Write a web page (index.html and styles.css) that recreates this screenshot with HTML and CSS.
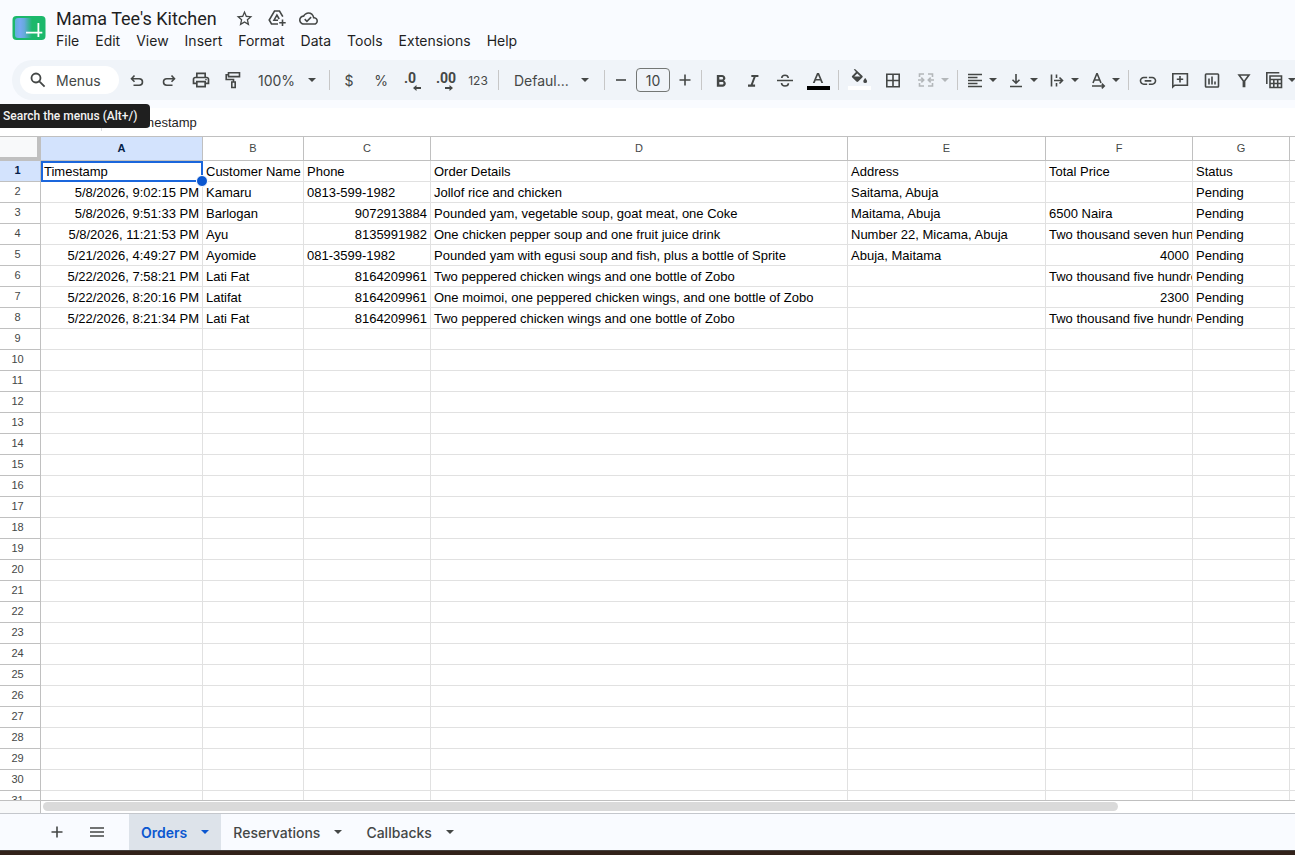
FILE: index.html
```html
<!DOCTYPE html>
<html lang="en">
<head>
  <meta charset="UTF-8">
  <meta name="viewport" content="width=device-width, initial-scale=1">
  <title>Mama Tee's Kitchen</title>
  <link rel="stylesheet" href="styles.css">
</head>
<body>
  <!-- Shared icons -->
  <svg class="sprite" aria-hidden="true">
    <symbol id="caret" viewBox="0 0 8 4"><path d="M0 0h8L4 4z"/></symbol>
    <symbol id="plus" viewBox="0 0 20 20"><path d="M9.200 4.500h1.600v4.700h4.700v1.600h-4.700v4.700H9.200v-4.700H4.500V9.200h4.700z"/></symbol>
  </svg>

  <header class="top">
    <a class="logo" href="#" aria-label="Sheets home">
      <svg width="34" height="26" viewBox="0 0 34 26">
        <defs>
          <linearGradient id="logoBlue"><stop offset="0" stop-color="#5fb0d8"/><stop offset=".3" stop-color="#76a9f2"/><stop offset=".55" stop-color="#66a9dc"/><stop offset="1" stop-color="#1cb86b"/></linearGradient>
        </defs>
        <rect x=".5" y="1" width="33" height="24" rx="4" fill="#1cb86b"/>
        <path d="M6 3h14v20H6a3 3 0 0 1-3-3V6a3 3 0 0 1 3-3z" fill="url(#logoBlue)"/>
        <path d="M25.500 8h1.800v8.700h3v1.700h-3V22h-1.800v-3.600H14v-1.700h11.500z" fill="#fff"/>
      </svg>
    </a>
    <div class="heading">
      <div class="title-row">
        <h1>Mama Tee's Kitchen</h1>
        <button class="mini" aria-label="Star"><svg width="19" height="19" viewBox="0 0 24 24"><path d="M22 9.240l-7.190-.62L12 2 9.190 8.630 2 9.240l5.460 4.730L5.820 21 12 17.270 18.180 21l-1.630-7.030L22 9.240zM12 15.400l-3.760 2.270 1-4.280-3.320-2.880 4.380-.38L12 6.100l1.710 4.040 4.380.38-3.320 2.880 1 4.280L12 15.400z"/></svg></button>
        <button class="mini" aria-label="Add shortcut to Drive"><svg width="20" height="20" viewBox="0 0 20 20"><path class="line" d="M11 16H4.500L2.200 12 7.500 3h5l3.300 5.700M11 12.200H7L9.900 7l2.300 4M15.500 11.500v6.500M12.200 14.800h6.500"/></svg></button>
        <button class="mini" aria-label="See document status"><svg width="19" height="19" viewBox="0 0 24 24"><path d="M19.350 10.040C18.670 6.590 15.640 4 12 4 9.110 4 6.600 5.640 5.350 8.040 2.340 8.360 0 10.910 0 14c0 3.310 2.690 6 6 6h13c2.760 0 5-2.240 5-5 0-2.640-2.050-4.780-4.650-4.960zM19 18H6c-2.210 0-4-1.790-4-4 0-2.050 1.530-3.760 3.560-3.970l1.070-.11.5-.95C8.080 7.140 9.940 6 12 6c2.620 0 4.880 1.860 5.390 4.430l.3 1.500 1.530.11c1.560.1 2.780 1.410 2.780 2.960 0 1.650-1.350 3-3 3zm-9-3.820l-2.090-2.090L6.500 13.500 10 17l6.010-6.010-1.410-1.410z"/></svg></button>
      </div>
      <nav class="menu">
        <button>File</button>
        <button>Edit</button>
        <button>View</button>
        <button>Insert</button>
        <button>Format</button>
        <button>Data</button>
        <button>Tools</button>
        <button>Extensions</button>
        <button>Help</button>
      </nav>
    </div>
  </header>

  <div class="toolbar" role="toolbar" aria-label="Main">
    <label class="search">
      <svg width="20" height="20" viewBox="0 0 20 20"><path class="line thick" d="M11.600 11.600l5 5M12.500 8a4.500 4.500 0 1 1-9 0 4.500 4.500 0 0 1 9 0z"/></svg>
      <input type="text" placeholder="Menus" aria-label="Search the menus">
      <span class="tooltip">Search the menus (Alt+/)</span>
    </label>
    <button class="tool" aria-label="Undo"><svg width="20" height="20" viewBox="0 0 20 20"><path class="line" d="M7.500 5.500L4.500 8.700l3 3.100M4.800 8.700h7.400a3.300 3.300 0 0 1 0 6.600H6.500"/></svg></button>
    <button class="tool" aria-label="Redo"><svg width="20" height="20" viewBox="0 0 20 20"><path class="line" d="M12.500 5.500l3 3.200-3 3.100M15.200 8.700H7.800a3.300 3.300 0 0 0 0 6.600h5.700"/></svg></button>
    <button class="tool" aria-label="Print"><svg width="20" height="20" viewBox="0 0 24 24"><path d="M19 8h-1V3H6v5H5c-1.660 0-3 1.340-3 3v6h4v4h12v-4h4v-6c0-1.660-1.340-3-3-3zM8 5h8v3H8V5zm8 14H8v-4h8v4zm2-4v-2H6v2H4v-4c0-.55.450-1 1-1h14c.55 0 1 .450 1 1v4h-2z"/><circle cx="18" cy="11.500" r="1"/></svg></button>
    <button class="tool" aria-label="Paint format"><svg width="20" height="20" viewBox="0 0 20 20"><path class="line" d="M5.500 2.800h11v3.800h-11zM5.500 4.700H3.200v4.800h7.300v2.500M8.800 12h3.400v5.500H8.800z"/></svg></button>
    <label class="drop zoom">
      <select aria-label="Zoom"><option>100%</option></select>
      <svg class="caret"><use href="#caret"/></svg>
    </label>
    <span class="sep"></span>
    <button class="tool sym">$</button>
    <button class="tool sym">%</button>
    <button class="tool sym dec" aria-label="Decrease decimal places"><b>.0</b><svg width="8" height="6" viewBox="0 0 8 6"><path d="M8 2v2H3.500v2L0 3l3.500-3v2z"/></svg></button>
    <button class="tool sym dec" aria-label="Increase decimal places"><b>.00</b><svg width="8" height="6" viewBox="0 0 8 6"><path d="M0 2v2h4.500v2L8 3 4.500 0v2z"/></svg></button>
    <button class="tool num">123</button>
    <span class="sep"></span>
    <label class="drop font">
      <select aria-label="Font"><option>Defaul...</option></select>
      <svg class="caret"><use href="#caret"/></svg>
    </label>
    <span class="sep"></span>
    <button class="tool step" aria-label="Decrease font size"><svg width="20" height="20" viewBox="0 0 20 20"><path d="M5 9.200h10v1.600H5z"/></svg></button>
    <input class="size" type="text" value="10" aria-label="Font size">
    <button class="tool step" aria-label="Increase font size"><svg width="20" height="20"><use href="#plus"/></svg></button>
    <span class="sep"></span>
    <button class="tool" aria-label="Bold"><svg width="20" height="20" viewBox="0 0 24 24"><path d="M15.600 12.790c.97-.67 1.650-1.770 1.650-2.790 0-2.260-1.750-4-4-4H7v14h7.040c2.090 0 3.710-1.700 3.710-3.790 0-1.520-.86-2.820-2.150-3.420zM10 8.500h3c.83 0 1.500.670 1.500 1.500s-.67 1.500-1.500 1.500h-3v-3zm3.500 9H10v-3h3.500c.83 0 1.500.670 1.500 1.500s-.67 1.500-1.500 1.500z"/></svg></button>
    <button class="tool" aria-label="Italic"><svg width="20" height="20" viewBox="0 0 24 24"><path d="M10 6v2.500h2.700l-3.400 9H6V20h8.500v-2.500h-2.700l3.400-9H18.500V6z"/></svg></button>
    <button class="tool" aria-label="Strikethrough"><svg width="20" height="20" viewBox="0 0 20 20"><path class="line" d="M2 10.500h16M13.300 8C13 6.100 11.800 5.200 10 5.200S6.800 6 6.800 7.900M6.500 13c.2 2 1.600 3 3.500 3s3.400-1 3.400-2.800"/></svg></button>
    <button class="tool color" aria-label="Text color"><svg width="24" height="22" viewBox="0 0 24 22"><path d="M11 4h2l4.200 10h-1.900l-1-2.500H9.700l-1 2.500H6.800zm1 1.900L10.200 10h3.600z"/><path fill="#000" d="M1 17h23v4H1z"/></svg></button>
    <span class="sep"></span>
    <button class="tool color" aria-label="Fill color"><svg width="24" height="22" viewBox="0 0 24 22"><path transform="translate(1 1)" d="M5.800-.6L7-1l7.300 6.700c.6.600.6 1.100 0 1.700l-4.100 4.100c-.6.600-1.200.6-1.800 0L4.300 7.400c-.6-.6-.6-1.100 0-1.700L8 2.100zM9.200 3.400L6.200 6.500h6.200zM17.200 8s-1.900 2-1.900 3.200a1.900 1.900 0 0 0 3.800 0C19.100 10 17.200 8 17.200 8z"/><path fill="#fff" d="M1 17h23v4H1z"/></svg></button>
    <button class="tool color" aria-label="Borders"><svg width="20" height="20" viewBox="0 0 20 20"><path class="line" d="M3.800 4.300h12.400v12.400H3.800zM10 4.500v12M4 10.500h12"/></svg></button>
    <button class="tool split merge" aria-label="Merge cells" disabled><svg width="20" height="20" viewBox="0 0 20 20"><path class="line" d="M8 4H3.500v3M12 4h4.500v3M8 16H3.500v-3M12 16h4.500v-3M2 10h5.500M5.300 7.600L7.700 10l-2.400 2.400M18 10h-5.500M14.700 7.600L12.300 10l2.400 2.400"/></svg><svg class="caret"><use href="#caret"/></svg></button>
    <span class="sep"></span>
    <button class="tool split" aria-label="Horizontal align"><svg width="20" height="20" viewBox="0 0 20 20"><path class="line" d="M3 4.500h14M3 7.500h9.500M3 10.500h14M3 13.500h9.500M3 16.500h14"/></svg><svg class="caret"><use href="#caret"/></svg></button>
    <button class="tool split" aria-label="Vertical align"><svg width="20" height="20" viewBox="0 0 20 20"><path class="line" d="M4 16.500h12M10 4v9M6.500 9.700l3.500 3.500 3.500-3.500"/></svg><svg class="caret"><use href="#caret"/></svg></button>
    <button class="tool split" aria-label="Text wrapping"><svg width="20" height="20" viewBox="0 0 20 20"><path class="line" d="M4.500 4.500v12M9.500 4.500V8M9.500 13v3.500M7 10.500h8.500M12.500 7.500l3 3-3 3"/></svg><svg class="caret"><use href="#caret"/></svg></button>
    <button class="tool split" aria-label="Text rotation"><svg width="20" height="20" viewBox="0 0 20 20"><path class="line" d="M5 13L8.800 3.800h.4L13 13M6.300 10h5.400M4 16h12M13.800 13.700l2.400 2.300-2.400 2.300"/></svg><svg class="caret"><use href="#caret"/></svg></button>
    <span class="sep"></span>
    <button class="tool" aria-label="Insert link"><svg width="20" height="20" viewBox="0 0 24 24"><path d="M3.900 13c0-1.710 1.390-3.100 3.100-3.100h4V8H7c-2.760 0-5 2.240-5 5s2.240 5 5 5h4v-1.900H7c-1.710 0-3.100-1.390-3.100-3.100zM8 14h8v-2H8v2zm9-6h-4v1.900h4c1.710 0 3.100 1.390 3.100 3.100s-1.390 3.100-3.100 3.100h-4V18h4c2.760 0 5-2.240 5-5s-2.240-5-5-5z"/></svg></button>
    <button class="tool" aria-label="Insert comment"><svg width="20" height="20" viewBox="0 0 20 20"><path class="line" d="M2.800 17V3.700h14.600v11.500H4.700zM10 6v6.400M6.800 9.200h6.400"/></svg></button>
    <button class="tool" aria-label="Insert chart"><svg width="20" height="20" viewBox="0 0 20 20"><path class="line" d="M4.300 4h11.400q.8 0 .8.800v11.400q0 .8-.8.800H4.300q-.8 0-.8-.8V4.800q0-.8.8-.8zM7 8.500v6M10 6.500v8M13 11.500v3"/></svg></button>
    <button class="tool" aria-label="Create a filter"><svg width="20" height="20" viewBox="0 0 20 20"><path class="line" d="M5 5h10l-4.400 6v5.500H9.400V11z"/></svg></button>
    <button class="tool split" aria-label="Table views"><svg width="20" height="20" viewBox="0 0 20 20"><path class="line" d="M2.800 14V2.700h12.500M6 6h11.500v11.500H6zM6 9.500h11.500M6 13.500h11.500M9.800 9.500v8M13.700 9.500v8"/></svg><svg class="caret"><use href="#caret"/></svg></button>
  </div>

  <div class="formula-bar">
    <input class="name-box" type="text" value="A1" aria-label="Name box">
    <span class="fx">fx</span>
    <input class="formula" type="text" value="Timestamp" aria-label="Formula">
  </div>

  <main class="grid">
    <table>
      <colgroup>
        <col class="col-num"><col class="col-a"><col class="col-b"><col class="col-c"><col class="col-d"><col class="col-e"><col class="col-f"><col class="col-g"><col>
      </colgroup>
      <thead>
        <tr><th class="corner"></th><th class="active">A</th><th>B</th><th>C</th><th>D</th><th>E</th><th>F</th><th>G</th><th></th></tr>
      </thead>
      <tbody id="rows">
        <tr><th class="active">1</th><td class="selected">Timestamp</td><td>Customer Name</td><td>Phone</td><td>Order Details</td><td>Address</td><td>Total Price</td><td>Status</td><td></td></tr>
        <tr><th>2</th><td class="r">5/8/2026, 9:02:15 PM</td><td>Kamaru</td><td>0813-599-1982</td><td>Jollof rice and chicken</td><td>Saitama, Abuja</td><td></td><td>Pending</td><td></td></tr>
        <tr><th>3</th><td class="r">5/8/2026, 9:51:33 PM</td><td>Barlogan</td><td class="r">9072913884</td><td>Pounded yam, vegetable soup, goat meat, one Coke</td><td>Maitama, Abuja</td><td>6500 Naira</td><td>Pending</td><td></td></tr>
        <tr><th>4</th><td class="r">5/8/2026, 11:21:53 PM</td><td>Ayu</td><td class="r">8135991982</td><td>One chicken pepper soup and one fruit juice drink</td><td>Number 22, Micama, Abuja</td><td>Two thousand seven hundred</td><td>Pending</td><td></td></tr>
        <tr><th>5</th><td class="r">5/21/2026, 4:49:27 PM</td><td>Ayomide</td><td>081-3599-1982</td><td>Pounded yam with egusi soup and fish, plus a bottle of Sprite</td><td>Abuja, Maitama</td><td class="r">4000</td><td>Pending</td><td></td></tr>
        <tr><th>6</th><td class="r">5/22/2026, 7:58:21 PM</td><td>Lati Fat</td><td class="r">8164209961</td><td>Two peppered chicken wings and one bottle of Zobo</td><td></td><td>Two thousand five hundred</td><td>Pending</td><td></td></tr>
        <tr><th>7</th><td class="r">5/22/2026, 8:20:16 PM</td><td>Latifat</td><td class="r">8164209961</td><td>One moimoi, one peppered chicken wings, and one bottle of Zobo</td><td></td><td class="r">2300</td><td>Pending</td><td></td></tr>
        <tr><th>8</th><td class="r">5/22/2026, 8:21:34 PM</td><td>Lati Fat</td><td class="r">8164209961</td><td>Two peppered chicken wings and one bottle of Zobo</td><td></td><td>Two thousand five hundred</td><td>Pending</td><td></td></tr>
      </tbody>
    </table>
  </main>

  <div class="scroll"><div class="track"><div class="thumb"></div></div></div>

  <footer class="sheets">
    <button class="sheet-btn" aria-label="Add sheet"><svg width="20" height="20"><use href="#plus"/></svg></button>
    <button class="sheet-btn" aria-label="All sheets"><svg width="20" height="20" viewBox="0 0 20 20"><path d="M3 5.200h14v1.600H3zm0 4h14v1.600H3zm0 4h14v1.600H3z"/></svg></button>
    <button class="tab current">Orders <svg class="caret"><use href="#caret"/></svg></button>
    <button class="tab">Reservations <svg class="caret"><use href="#caret"/></svg></button>
    <button class="tab">Callbacks <svg class="caret"><use href="#caret"/></svg></button>
  </footer>
  <div class="edge"></div>

  <script>
    // Empty rows below the data
    const rows = document.getElementById('rows');
    for (let i = 9; i <= 60; i++) {
      const tr = document.createElement('tr');
      tr.innerHTML = `<th>${i}</th>` + '<td></td>'.repeat(8);
      rows.appendChild(tr);
    }
  </script>
</body>
</html>
```
FILE: styles.css
```css
* { box-sizing: border-box; margin: 0; padding: 0; }

body {
  display: flex;
  flex-direction: column;
  height: 100vh;
  overflow: hidden;
  background: #f9fbff;
  color: #1f1f1f;
  font-family: Inter, "Open Sans", sans-serif;
  font-size: 14px;
}

button, input, select {
  border: none;
  background: none;
  color: inherit;
  font: inherit;
}
button { cursor: pointer; }
svg { flex: none; fill: #444746; }
.line { fill: none; stroke: #444746; stroke-width: 1.6; }
.thick { stroke-width: 1.8; }
.sprite { display: none; }
.caret { width: 8px; height: 4px; }

/* Title and menus */
.top {
  display: flex;
  flex: none;
  height: 60px;
  padding-left: 12px;
}
.logo { margin-top: 15px; }
.heading { padding: 6px 0 0 10px; }
.title-row {
  display: flex;
  align-items: center;
  gap: 12px;
  height: 24px;
}
h1 {
  margin-right: 6px;
  font-family: Roboto, sans-serif;
  font-size: 18px;
  font-weight: 400;
}
.mini {
  display: flex;
  justify-content: center;
  width: 20px;
}
.menu {
  display: flex;
  gap: 16px;
}
.menu button { height: 20px; }

/* Toolbar */
.toolbar {
  display: flex;
  flex: none;
  align-items: center;
  gap: 4px;
  height: 40px;
  margin-left: 12px;
  padding-left: 8px;
  border-radius: 20px 0 0 20px;
  background: #f0f4f9;
  color: #444746;
}
.toolbar > * { flex: none; }
.search {
  position: relative;
  display: flex;
  align-items: center;
  gap: 8px;
  width: 99px;
  height: 28px;
  padding-left: 8px;
  border-radius: 14px;
  background: #fff;
}
.search input { width: 56px; }
.search input::placeholder { color: #444746; }
.tooltip {
  position: absolute;
  top: 38px;
  left: -20px;
  z-index: 5;
  width: 150px;
  padding-left: 3px;
  border-radius: 0 4px 4px 0;
  background: #1f1f1f;
  color: #f2f2f2;
  font: 500 12px/24px Roboto, sans-serif;
  white-space: nowrap;
}
.tool {
  display: flex;
  align-items: center;
  justify-content: center;
  width: 28px;
  height: 28px;
}
.drop {
  display: flex;
  align-items: center;
  height: 28px;
}
.drop select { appearance: none; }
.zoom { width: 73px; padding-left: 7px; }
.zoom select { width: 50px; }
.font { width: 95px; padding-left: 10px; }
.font select { width: 67px; }
.sep {
  width: 1px;
  height: 20px;
  margin: 0 1px;
  background: #c7c7c7;
}
.num { width: 30px; font-size: 12px; }
.dec {
  flex-direction: column;
  align-items: flex-start;
  padding: 2px 0 0 5px;
  font-family: Roboto, sans-serif;
  line-height: 13px;
}
.dec svg { margin-left: 9px; }
.step { width: 22px; }
.size {
  width: 34px;
  height: 24px;
  border: 1px solid #747775;
  border-radius: 4px;
  text-align: center;
}
.color { width: 30px; }
.split { justify-content: flex-start; gap: 4px; width: 37px; padding-left: 2px; }
.merge { gap: 5px; width: 40px; padding-left: 4px; opacity: 0.35; }

/* Formula bar */
.formula-bar {
  display: flex;
  flex: none;
  align-items: center;
  height: 28px;
  margin-top: 8px;
  background: #fff;
  font-family: "Liberation Sans", Arial, sans-serif;
  font-size: 13px;
}
.name-box {
  width: 102px;
  height: 18px;
  padding-left: 12px;
  border-right: 1px solid #dadce0;
}
.fx {
  width: 31px;
  padding-left: 10px;
  color: #80868b;
  font-style: italic;
}
.formula { flex: 1; }

/* Cells */
.grid {
  flex: 1;
  min-height: 0;
  overflow: hidden;
  border-top: 1px solid #c0c0c0;
  background: #fff;
}
table {
  width: 100%;
  table-layout: fixed;
  border-spacing: 0;
  color: #000;
  font-family: "Liberation Sans", Arial, sans-serif;
  font-size: 13px;
}
.col-num { width: 41px; }
.col-a { width: 162px; }
.col-b { width: 101px; }
.col-c { width: 127px; }
.col-d { width: 417px; }
.col-e { width: 198px; }
.col-f { width: 147px; }
.col-g { width: 97px; }
th, td {
  height: 21px;
  border-right: 1px solid #e1e1e1;
  border-bottom: 1px solid #e1e1e1;
  line-height: 18px;
  white-space: nowrap;
}
th {
  padding-bottom: 2px;
  border-color: #c0c0c0;
  color: #444746;
  font-size: 11px;
  font-weight: 400;
}
thead th { height: 24px; }
tbody th { padding-right: 5px; }
td {
  padding: 2px 3px 0;
  overflow: hidden;
}
td:nth-child(3) { padding-right: 0; }
th:last-child, td:last-child { border-right: none; }
.r { text-align: right; }
tbody th { border-right: 1px solid #c0c0c0; }
th.active {
  background: #d3e3fd;
  color: #041e49;
  font-weight: 700;
}
.corner {
  border-right: 4px solid #c0c0c0;
  border-bottom: 4px solid #c0c0c0;
  background: #f8f9fa;
}
.selected {
  position: relative;
  overflow: visible;
}
.selected::before {
  content: "";
  position: absolute;
  inset: 0 -1px -1px 0;
  border: 2px solid #1a66dc;
}
.selected::after {
  content: "";
  position: absolute;
  right: -6px;
  bottom: -6px;
  width: 10px;
  height: 10px;
  border: 1px solid #fff;
  border-radius: 50%;
  background: #0b57d0;
}

/* Horizontal scrollbar */
.scroll {
  flex: none;
  height: 14px;
  padding-left: 40px;
  border-top: 1px solid #c0c0c0;
  border-bottom: 1px solid #c4c7cc;
  background: #f8f9fa;
}
.track {
  height: 12px;
  padding: 1px 2px;
  border-left: 1px solid #c0c0c0;
  background: #fff;
}
.thumb {
  width: 86%;
  height: 9px;
  border-radius: 5px;
  background: #dadada;
}

/* Sheet tabs */
.sheets {
  display: flex;
  flex: none;
  height: 36px;
  padding-left: 41px;
}
.sheet-btn {
  display: flex;
  align-items: center;
  justify-content: center;
  width: 32px;
  margin-right: 8px;
}
.sheet-btn + .tab { margin-left: 8px; }
.tab {
  display: flex;
  align-items: center;
  gap: 14px;
  padding: 0 12px;
  color: #444746;
  font-weight: 500;
}
.current {
  background: #dde3ea;
  color: #0b57d0;
  font-weight: 600;
}
.current svg { fill: #0b57d0; }
.edge {
  flex: none;
  height: 5px;
  border-top: 1px solid #45413e;
  background: #32221a;
}
```
